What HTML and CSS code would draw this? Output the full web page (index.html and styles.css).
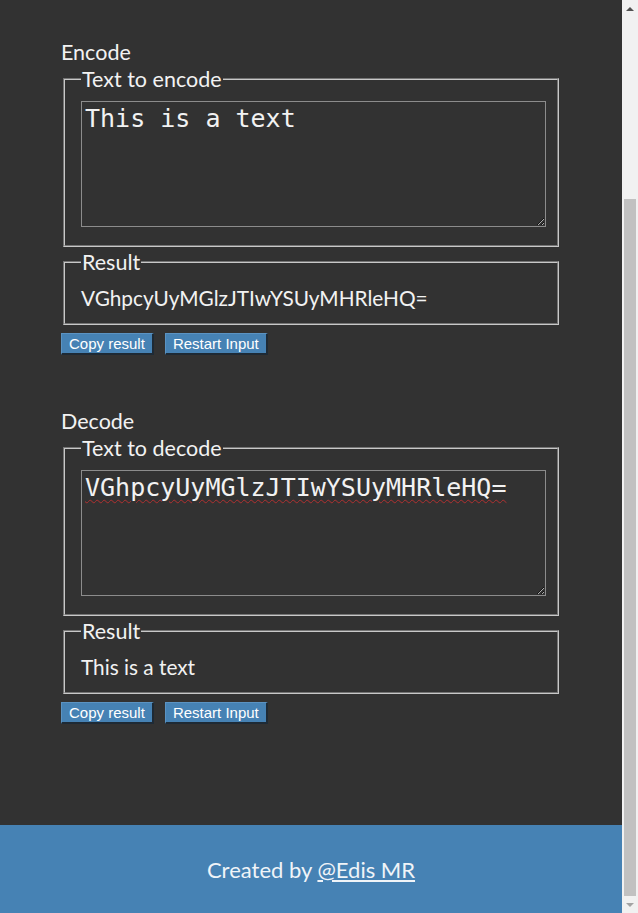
FILE: index.html
```html
<!DOCTYPE html>
<html lang="en">
<head>
<meta charset="utf-8">
<title>Base64 Encode / Decode</title>
<link rel="stylesheet" href="styles.css">
</head>
<body>
<div class="page">
  <main class="main">
    <section class="tool">
      <h2 class="tool-title">Encode</h2>
      <fieldset class="box box-input">
        <legend class="box-legend">Text to encode</legend>
        <textarea class="box-area" spellcheck="false">This is a text</textarea>
      </fieldset>
      <fieldset class="box box-result">
        <legend class="box-legend">Result</legend>
        <div class="result-text">VGhpcyUyMGlzJTIwYSUyMHRleHQ=</div>
      </fieldset>
      <div class="actions">
        <button class="btn" type="button">Copy result</button>
        <button class="btn" type="button">Restart Input</button>
      </div>
    </section>
    <section class="tool">
      <h2 class="tool-title">Decode</h2>
      <fieldset class="box box-input">
        <legend class="box-legend">Text to decode</legend>
        <textarea class="box-area box-area-misspelled" spellcheck="false">VGhpcyUyMGlzJTIwYSUyMHRleHQ=</textarea>
      </fieldset>
      <fieldset class="box box-result">
        <legend class="box-legend">Result</legend>
        <div class="result-text">This is a text</div>
      </fieldset>
      <div class="actions">
        <button class="btn" type="button">Copy result</button>
        <button class="btn" type="button">Restart Input</button>
      </div>
    </section>
  </main>
  <footer class="footer">
    <p class="footer-text">Created by <a class="footer-link" href="#">@Edis MR</a></p>
  </footer>
</div>
<div class="scrollbar" aria-hidden="true">
  <div class="scroll-arrow scroll-arrow-up"></div>
  <div class="scroll-track"><div class="scroll-thumb"></div></div>
  <div class="scroll-arrow scroll-arrow-down"></div>
</div>
</body>
</html>
```

FILE: styles.css
```css
html, body {
  margin: 0;
  padding: 0;
  height: 100%;
  overflow: hidden;
}

body {
  background: #323232;
  color: #f2f2f2;
  font-family: Lato, "Open Sans", sans-serif;
}

.page {
  margin-right: 16px;
  min-height: 913px;
  display: flex;
  flex-direction: column;
}

.main {
  width: 500px;
  margin: 0 auto;
  padding: 40px 0 101px;
  display: flex;
  flex-direction: column;
  gap: 54px;
}

.tool {
  display: flex;
  flex-direction: column;
}

.tool-title {
  margin: 0;
  font-size: 21.5px;
  line-height: 24px;
  font-weight: normal;
}

.box {
  margin: 3px 2px 0;
  border: 2px groove #c8c8c8;
  min-width: 0;
}

.box-legend {
  font-size: 21.5px;
  line-height: 24px;
  padding: 0 1px;
  margin-left: 0;
}

.box-input {
  padding: 10px 11px 18px 16px;
}

.box-area {
  display: block;
  box-sizing: border-box;
  width: 100%;
  height: 126px;
  margin: 0;
  padding: 2px 3px;
  background: #323232;
  color: #f2f2f2;
  border: 1px solid #8c8c8c;
  font-family: "DejaVu Sans Mono", "Liberation Mono", monospace;
  font-size: 25px;
  line-height: 29px;
  resize: vertical;
  outline: none;
}

.box-area-misspelled {
  text-decoration: underline wavy #b03030;
  text-decoration-thickness: 1px;
  text-underline-offset: 3px;
}

.box-result {
  padding: 12px 16px 13px;
}

.result-text {
  font-size: 20.8px;
  line-height: 24px;
}

.actions {
  display: flex;
  gap: 11px;
  margin-top: 8px;
}

.btn {
  box-sizing: border-box;
  height: 22px;
  padding: 0 7px;
  margin: 0;
  background: #4682b4;
  color: #ffffff;
  font-family: "Liberation Sans", Arial, sans-serif;
  font-size: 15px;
  line-height: 18px;
  border-style: solid;
  border-width: 1px 2px 2px 1px;
  border-color: #5b93c2 #1e2a35 #1e2a35 #5b93c2;
  cursor: pointer;
}

.footer {
  margin-top: auto;
  height: 88px;
  background: #4682b4;
  display: flex;
  align-items: center;
  justify-content: center;
}

.footer-text {
  margin: 0;
  font-size: 22px;
  line-height: 26px;
  color: #f0f4f8;
  padding-top: 2px;
}

.footer-link {
  color: #f0f4f8;
  text-decoration: underline;
}

.scrollbar {
  position: fixed;
  top: 0;
  right: 0;
  width: 16px;
  height: 100%;
  background: #f1f1f1;
  display: flex;
  flex-direction: column;
}

.scroll-arrow {
  height: 17px;
  display: flex;
  align-items: center;
  justify-content: center;
}

.scroll-arrow-up::before {
  content: "";
  border-left: 4px solid transparent;
  border-right: 4px solid transparent;
  border-bottom: 4px solid #505050;
}

.scroll-arrow-down::before {
  content: "";
  border-left: 4px solid transparent;
  border-right: 4px solid transparent;
  border-top: 4px solid #a3a3a3;
}

.scroll-track {
  flex: 1;
  display: flex;
  flex-direction: column;
  justify-content: flex-end;
  padding: 0 2px;
}

.scroll-thumb {
  height: 697px;
  background: #c1c1c1;
}
```
